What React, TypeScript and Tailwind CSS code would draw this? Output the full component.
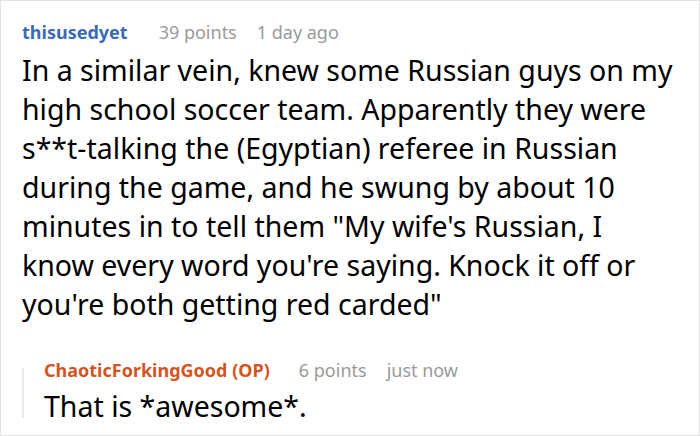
import React from 'react';

interface CommentProps {
  author: string;
  points: number;
  time: string;
  op?: boolean;
  gap: string;
  bodyClass: string;
  lines: string[];
}

// header row: author, score, age
const Meta: React.FC<{ author: string; points: number; time: string; op?: boolean; gap: string }> = ({ author, points, time, op, gap }) => (
  <div className="flex items-baseline text-[18px] leading-[24px] whitespace-nowrap">
    <span className={`font-bold ${op ? 'text-[#d4541f]' : 'text-[#3a6bb4]'}`}>
      {author}{op ? ' (OP)' : ''}
    </span>
    <span className={`${gap} text-[#9a9a9a]`}>{points} points</span>
    <span className="ml-[20px] text-[#9a9a9a]">{time}</span>
  </div>
);

const Comment: React.FC<CommentProps> = ({ author, points, time, op, gap, bodyClass, lines }) => (
  <div>
    <Meta author={author} points={points} time={time} op={op} gap={gap} />
    <p className={`text-[28.5px] leading-[39px] text-black whitespace-nowrap ${bodyClass}`}>
      {lines.map((l, i) => (
        <span key={i} className="block">{l}</span>
      ))}
    </p>
  </div>
);

export default function App() {
  return (
    <div
      className="w-[700px] h-[436px] bg-white border border-[#e2e2e2] pl-[21px] pt-[19px] overflow-hidden"
      style={{ fontFamily: '"Noto Sans", "Open Sans", sans-serif' }}
    >
      <Comment
        author="thisusedyet"
        points={39}
        time="1 day ago"
        gap="ml-[31px]"
        bodyClass="mt-[7px]"
        lines={[
          'In a similar vein, knew some Russian guys on my',
          'high school soccer team. Apparently they were',
          's**t-talking the (Egyptian) referee in Russian',
          'during the game, and he swung by about 10',
          'minutes in to tell them "My wife\'s Russian, I',
          'know every word you\'re saying. Knock it off or',
          'you\'re both getting red carded"',
        ]}
      />
      <div className="mt-[34px] flex">
        <div className="w-[2px] h-[50px] mt-[10px] bg-[#e8e8e8] shrink-0" />
        <div className="ml-[20px]">
          <Comment
            author="ChaoticForkingGood"
            points={6}
            time="just now"
            op
            gap="ml-[29px]"
            bodyClass="mt-[5px]"
            lines={['That is *awesome*.']}
          />
        </div>
      </div>
    </div>
  );
}
